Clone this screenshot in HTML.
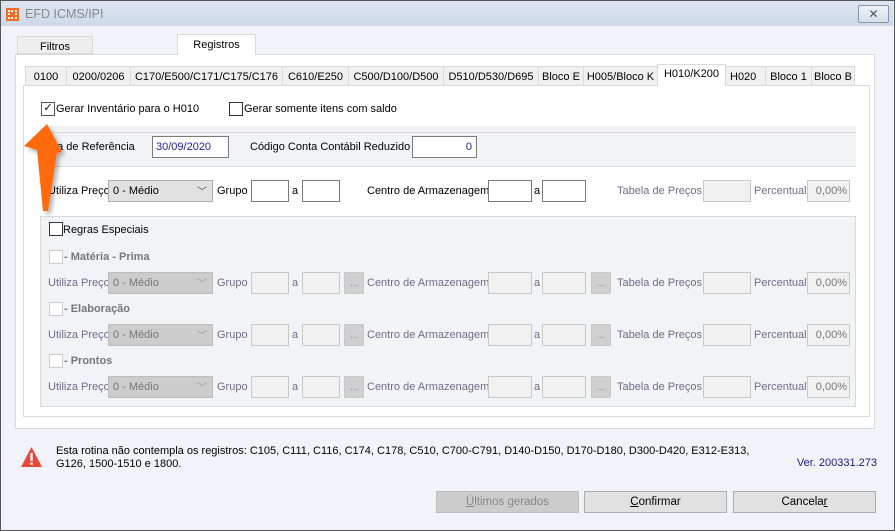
<!DOCTYPE html>
<html><head><meta charset="utf-8"><style>
*{box-sizing:border-box;margin:0;padding:0}
body{width:895px;height:531px;overflow:hidden;font-family:"Liberation Sans",sans-serif;font-size:11px;color:#000;background:#f0f2f7;position:relative}
.a{position:absolute;white-space:nowrap}
.win{position:absolute;left:0;top:0;width:895px;height:531px;border:1px solid #555;background:#f1f3f8}
.title{position:absolute;left:1px;top:1px;width:892px;height:25px;background:linear-gradient(#dde5f1,#ccd8e9)}
.inp{position:absolute;background:#fff;border:1px solid #7a7a7a;height:22px}
.dis{background:#f1f1f1;border-color:#c8c8c8}
.sel{position:absolute;background:#e1e1e1;border:1px solid #adadad;height:22px;padding:4px 4px}
.seld{background:#cccccc;border-color:#bdbdbd;color:#777}
.cb{position:absolute;width:14px;height:14px;border:1px solid #333;background:#fff}
.cbd{border-color:#ccc}
.tab{position:absolute;top:66px;height:19px;border:1px solid #d9d9d9;border-bottom:none;background:#f0f0f0;padding:4px 0 0 0;text-align:center}
.g{color:#6d6d8a}
.btn{position:absolute;top:491px;height:22px;border:1px solid #adadad;background:#e1e1e1;text-align:center;padding-top:4px;font-size:11.5px}
.dots{position:absolute;width:20px;height:22px;background:#d0d0d0;border:1px solid #c8c8c8;color:#888;text-align:center;font-size:10px;padding-top:5px}
</style></head><body>
<div class="win"></div>
<div class="title"></div>
<div class="a" style="left:6px;top:8px;width:13px;height:13px;background:#f26c22"></div>
<div class="a" style="left:8px;top:10px;width:9px;height:9px;border:2px dotted #fff"></div>
<div class="a" style="left:25px;top:7px;font-size:12.5px;color:#8a8a8a">EFD ICMS/IPI</div>
<div class="a" style="left:858px;top:5px;width:31px;height:18px;border:1px solid #8a96a8;border-radius:2px;background:linear-gradient(#eef2f8,#d7dfec);text-align:center;font-size:12px;color:#555;line-height:16px">✕</div>

<div class="a" style="left:17px;top:36px;width:76px;height:18px;background:#eeeeee;border:1px solid #d9d9d9;text-align:center;padding-top:4px">Filtros</div>
<div class="a" style="left:177px;top:34px;width:79px;height:21px;background:#fff;border:1px solid #d9d9d9;border-bottom:none;text-align:center;padding-top:4px;z-index:2">Registros</div>
<div class="a" style="left:15px;top:54px;width:860px;height:375px;background:#fff;border:1px solid #d9d9d9"></div>

<div class="tab" style="left:25px;width:42px">0100</div>
<div class="tab" style="left:66px;width:65px">0200/0206</div>
<div class="tab" style="left:130px;width:153px">C170/E500/C171/C175/C176</div>
<div class="tab" style="left:282px;width:67px">C610/E250</div>
<div class="tab" style="left:348px;width:96px">C500/D100/D500</div>
<div class="tab" style="left:443px;width:96px">D510/D530/D695</div>
<div class="tab" style="left:538px;width:46px">Bloco E</div>
<div class="tab" style="left:583px;width:75px">H005/Bloco K</div>
<div class="tab" style="left:657px;top:64px;height:22px;width:69px;background:#fff;z-index:2;padding-top:3px">H010/K200</div>
<div class="tab" style="left:725px;width:41px;text-align:left;padding-left:4px">H020</div>
<div class="tab" style="left:765px;width:47px">Bloco 1</div>
<div class="tab" style="left:811px;width:44px">Bloco B</div>
<div class="a" style="left:23px;top:85px;width:847px;height:332px;background:#fff;border:1px solid #d9d9d9"></div>

<div class="cb" style="left:41px;top:102px;font-size:11px;line-height:11px;text-align:center;border-color:#555">✓</div>
<div class="a" style="left:56px;top:103px">Gerar Inventário para o H010</div>
<div class="cb" style="left:229px;top:102px"></div>
<div class="a" style="left:244px;top:103px">Gerar somente itens com saldo</div>

<div class="a" style="left:40px;top:126px;width:816px;height:41px;background:#f2f3f7;border-top:6px solid #f3f3f6;border-bottom:1px solid #dadada"></div>
<div class="a" style="left:40px;top:132px;width:816px;height:1px;background:#dadada"></div>
<div class="a" style="left:40px;top:141px">Data de Referência</div>
<div class="inp" style="left:152px;top:136px;width:77px;color:#2020a0;padding:4px 3px">30/09/2020</div>
<div class="a" style="left:250px;top:141px">Código Conta Contábil Reduzido</div>
<div class="inp" style="left:412px;top:136px;width:65px;color:#2020a0;text-align:right;padding:4px 4px">0</div>

<div class="a" style="left:48px;top:185px">Utiliza Preço</div>
<div class="sel" style="left:108px;top:180px;width:105px">0 - Médio<span style="position:absolute;right:5px;top:2px;color:#555;font-size:10px">﹀</span></div>
<div class="a" style="left:217px;top:185px">Grupo</div>
<div class="inp" style="left:251px;top:180px;width:38px"></div>
<div class="a" style="left:292px;top:185px">a</div>
<div class="inp" style="left:302px;top:180px;width:38px"></div>
<div class="a" style="left:367px;top:185px">Centro de Armazenagem</div>
<div class="inp" style="left:488px;top:180px;width:44px"></div>
<div class="a" style="left:534px;top:185px">a</div>
<div class="inp" style="left:542px;top:180px;width:44px"></div>
<div class="a g" style="left:617px;top:185px">Tabela de Preços</div>
<div class="inp dis" style="left:703px;top:180px;width:48px"></div>
<div class="a g" style="left:754px;top:185px">Percentual</div>
<div class="inp dis" style="left:807px;top:180px;width:43px;color:#777;padding:4px 2px;text-align:right">0,00%</div>

<div class="a" style="left:40px;top:216px;width:816px;height:191px;background:#f2f3f7;border:1px solid #dadada"></div>
<div class="cb" style="left:49px;top:222px"></div>
<div class="a" style="left:63px;top:224px">Regras Especiais</div>

<div class="cb cbd" style="left:49px;top:250px"></div><div class="a" style="left:64px;top:251px;font-weight:bold;color:#777">- Matéria - Prima</div>
<div class="cb cbd" style="left:49px;top:302px"></div><div class="a" style="left:64px;top:303px;font-weight:bold;color:#777">- Elaboração</div>
<div class="cb cbd" style="left:49px;top:354px"></div><div class="a" style="left:64px;top:355px;font-weight:bold;color:#777">- Prontos</div>

<div id="rows"></div>
<script>
var h='';[272,324,376].forEach(function(t){h+=
'<div class="a g" style="left:48px;top:'+(t+5)+'px">Utiliza Preço</div>'+
'<div class="sel seld" style="left:108px;top:'+t+'px;width:105px">0 - Médio<span style="position:absolute;right:5px;top:2px;color:#999;font-size:10px">﹀</span></div>'+
'<div class="a g" style="left:217px;top:'+(t+5)+'px">Grupo</div>'+
'<div class="inp dis" style="left:251px;top:'+t+'px;width:38px"></div>'+
'<div class="a g" style="left:292px;top:'+(t+5)+'px">a</div>'+
'<div class="inp dis" style="left:302px;top:'+t+'px;width:38px"></div>'+
'<div class="dots" style="left:344px;top:'+t+'px">...</div>'+
'<div class="a g" style="left:367px;top:'+(t+5)+'px">Centro de Armazenagem</div>'+
'<div class="inp dis" style="left:488px;top:'+t+'px;width:44px"></div>'+
'<div class="a g" style="left:534px;top:'+(t+5)+'px">a</div>'+
'<div class="inp dis" style="left:542px;top:'+t+'px;width:44px"></div>'+
'<div class="dots" style="left:591px;top:'+t+'px">...</div>'+
'<div class="a g" style="left:617px;top:'+(t+5)+'px">Tabela de Preços</div>'+
'<div class="inp dis" style="left:703px;top:'+t+'px;width:48px"></div>'+
'<div class="a g" style="left:754px;top:'+(t+5)+'px">Percentual</div>'+
'<div class="inp dis" style="left:807px;top:'+t+'px;width:43px;color:#777;padding:4px 2px;text-align:right">0,00%</div>';});
document.getElementById('rows').innerHTML=h;
</script>

<svg class="a" style="left:0;top:0" width="120" height="230">
<defs><filter id="s"><feDropShadow dx="3" dy="3" stdDeviation="2" flood-color="#000" flood-opacity="0.3"/></filter></defs>
<polygon points="47,124 24,146 37,150 43,211 48,211 57,153 62,152" fill="#ff6a0e" filter="url(#s)"/>
</svg>

<svg class="a" style="left:20px;top:446px" width="23" height="22"><polygon points="11.5,1 22,21 1,21" fill="#e8473c"/><rect x="10.3" y="7" width="2.4" height="8" fill="#fff"/><rect x="10.3" y="16.5" width="2.4" height="2.4" fill="#fff"/></svg>
<div class="a" style="left:56px;top:445px;line-height:13px">Esta rotina não contempla os registros: C105, C111, C116, C174, C178, C510, C700-C791, D140-D150, D170-D180, D300-D420, E312-E313,<br>G126, 1500-1510 e 1800.</div>
<div class="a" style="right:18px;top:457px;color:#1a1a8c">Ver. 200331.273</div>

<div class="btn" style="left:436px;width:143px;background:#cccccc;border-color:#bfbfbf;color:#888"><u>Ú</u>ltimos gerados</div>
<div class="btn" style="left:584px;width:143px"><u>C</u>onfirmar</div>
<div class="btn" style="left:733px;width:143px">Cancela<u>r</u></div>
</body></html>
